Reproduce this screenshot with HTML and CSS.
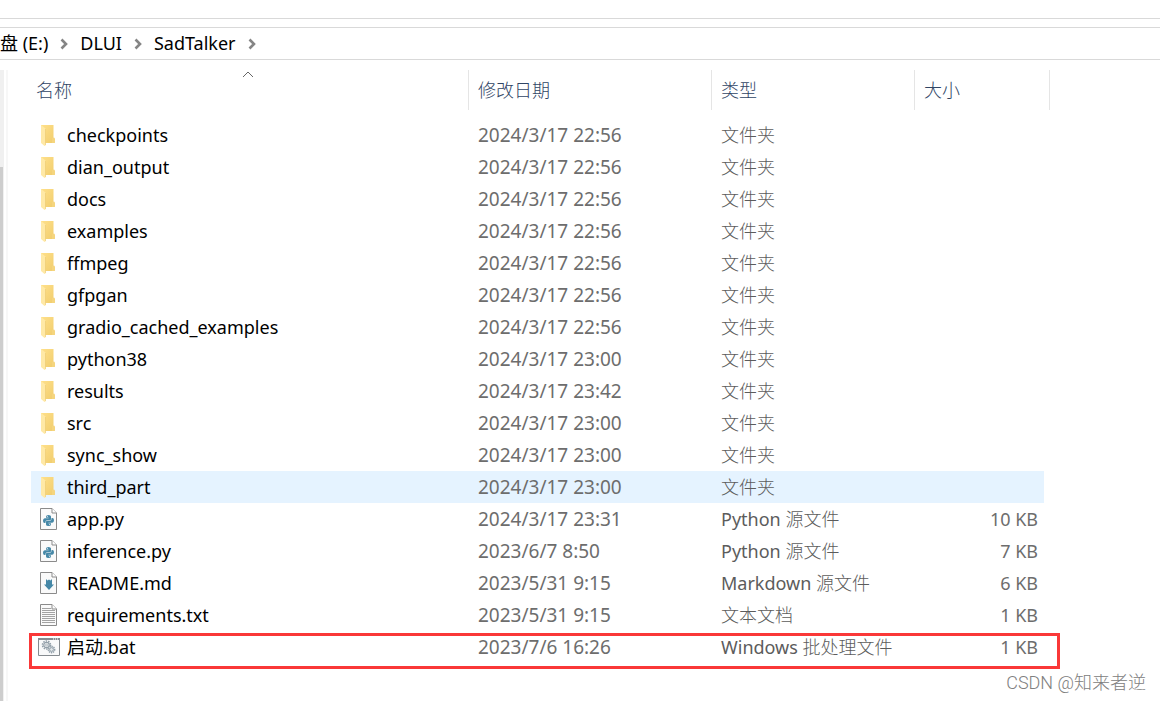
FILE: index.html
```html
<!DOCTYPE html>
<html lang="zh-CN">
<head>
<meta charset="utf-8">
<title>SadTalker</title>
<link rel="stylesheet" href="styles.css">
</head>
<body>
<svg class="sprite" width="0" height="0" aria-hidden="true">
  <defs>
    <linearGradient id="folder-back" x1="0" x2="1" y1="0" y2="1"><stop offset="0" stop-color="#ffe08a"/><stop offset="1" stop-color="#f0cc6c"/></linearGradient>
    <symbol id="chevron" viewBox="0 0 8 12"><path d="M1.5 1.5 6 6 1.5 10.5" fill="none" stroke="#858585" stroke-width="2.6"/></symbol>
    <symbol id="folder" viewBox="0 -1 22 22">
      <path d="M3 0H15.500V13L17 14V17.500L16 18H3Z" fill="url(#folder-back)"/>
      <path d="M14 13 16.200 12.500 17 14V17.500L15.500 18H14Z" fill="#f5d57e"/>
      <path d="M3 0 7.500 3.500V20.500L6.500 21 3 18Z" fill="#ffe9a6"/>
      <path d="M7.500 4V20" stroke="#edcb75" stroke-width=".7"/>
    </symbol>
    <symbol id="page" viewBox="0 0 22 22">
      <path d="M2.500.500H14L18.500 5V21.500H2.500Z" fill="#fafafa" stroke="#8b8b8b"/>
      <path d="M14 .500V5H18.500" fill="#fff" stroke="#8b8b8b"/>
    </symbol>
    <symbol id="python" viewBox="0 0 22 22">
      <use href="#page"/>
      <g fill="#4688a7">
        <path d="M8 8.500Q8 7 10.500 7T13 8.500V11.200Q13 12.300 11.800 12.300H9.200Q7.500 12.300 7.500 14V15H6.600Q5 15 5 12.700T6.700 10.300H10.600V9.700H8Z"/>
        <path d="M8 8.500Q8 7 10.500 7T13 8.500V11.200Q13 12.300 11.800 12.300H9.200Q7.500 12.300 7.500 14V15H6.600Q5 15 5 12.700T6.700 10.300H10.600V9.700H8Z" transform="rotate(180 10.500 12.500)"/>
      </g>
      <circle cx="9.300" cy="8.500" r=".5" fill="#fff"/><circle cx="11.700" cy="16.500" r=".5" fill="#fff"/>
    </symbol>
    <symbol id="markdown" viewBox="0 0 22 22">
      <use href="#page"/>
      <path d="M8 7 9.500 8.500 11 7.500 12.500 8.500 14 7V12.500H16L11 18 6 12.500H8Z" fill="#4688a7"/>
    </symbol>
    <symbol id="text" viewBox="0 0 22 22">
      <use href="#page"/>
      <path d="M4 4.500H13M4 6.500H17M4 8.500H17M4 10.500H17M4 12.500H17M4 14.500H17M4 16.500H17M4 18.500H17" stroke="#a3a3a3"/>
    </symbol>
    <symbol id="batch" viewBox="0 0 22 22">
      <path d="M.500 2.500H21.500V19.500H.500Z" fill="#f8f9fa" stroke="#858b90"/>
      <path d="M0 3H22" stroke="#858b90" stroke-width="2"/>
      <path d="M15 3H16M17 3H18M19 3H20" stroke="#fff"/>
      <g fill="none" stroke="#929fa9">
        <circle cx="8.500" cy="9" r="4" stroke-width="1.600" stroke-dasharray="1.500 1"/>
        <circle cx="8.500" cy="9" r="2.700" stroke-width="1.200"/>
        <circle cx="8.500" cy="9" r="1" stroke-width=".7"/>
        <circle cx="13.500" cy="13.500" r="3.200" fill="#e3e8eb" stroke-width="1.400" stroke-dasharray="1.300 .8"/>
        <circle cx="13.500" cy="13.500" r="1.900"/>
      </g>
    </symbol>
  </defs>
</svg>
<div class="window">
  <div class="toolbar"></div>
  <nav class="address" aria-label="路径">
    <a href="#drive">盘 (E:)</a><svg class="chevron"><use href="#chevron"/></svg>
    <a href="#dlui">DLUI</a><svg class="chevron"><use href="#chevron"/></svg>
    <a href="#sadtalker">SadTalker</a><svg class="chevron"><use href="#chevron"/></svg>
  </nav>
  <div class="content">
    <div class="scrollbar"><div class="thumb"></div></div>
    <div class="splitter"></div>
    <main class="files">
      <table>
        <colgroup><col class="col-name"><col class="col-date"><col class="col-type"><col class="col-size"></colgroup>
        <thead><tr>
          <th aria-sort="ascending"><button>名称</button><svg class="sort" viewBox="0 0 12 7"><path d="M1 6 6 1 11 6" fill="none" stroke="#666"/></svg></th>
          <th><button>修改日期</button></th><th><button>类型</button></th><th><button>大小</button></th>
        </tr></thead>
        <tbody>
          <tr><td><span class="name"><svg><use href="#folder"/></svg>checkpoints</span></td><td>2024/3/17 22:56</td><td>文件夹</td><td></td></tr>
          <tr><td><span class="name"><svg><use href="#folder"/></svg>dian_output</span></td><td>2024/3/17 22:56</td><td>文件夹</td><td></td></tr>
          <tr><td><span class="name"><svg><use href="#folder"/></svg>docs</span></td><td>2024/3/17 22:56</td><td>文件夹</td><td></td></tr>
          <tr><td><span class="name"><svg><use href="#folder"/></svg>examples</span></td><td>2024/3/17 22:56</td><td>文件夹</td><td></td></tr>
          <tr><td><span class="name"><svg><use href="#folder"/></svg>ffmpeg</span></td><td>2024/3/17 22:56</td><td>文件夹</td><td></td></tr>
          <tr><td><span class="name"><svg><use href="#folder"/></svg>gfpgan</span></td><td>2024/3/17 22:56</td><td>文件夹</td><td></td></tr>
          <tr><td><span class="name"><svg><use href="#folder"/></svg>gradio_cached_examples</span></td><td>2024/3/17 22:56</td><td>文件夹</td><td></td></tr>
          <tr><td><span class="name"><svg><use href="#folder"/></svg>python38</span></td><td>2024/3/17 23:00</td><td>文件夹</td><td></td></tr>
          <tr><td><span class="name"><svg><use href="#folder"/></svg>results</span></td><td>2024/3/17 23:42</td><td>文件夹</td><td></td></tr>
          <tr><td><span class="name"><svg><use href="#folder"/></svg>src</span></td><td>2024/3/17 23:00</td><td>文件夹</td><td></td></tr>
          <tr><td><span class="name"><svg><use href="#folder"/></svg>sync_show</span></td><td>2024/3/17 23:00</td><td>文件夹</td><td></td></tr>
          <tr class="hovered"><td><span class="name"><svg><use href="#folder"/></svg>third_part</span></td><td>2024/3/17 23:00</td><td>文件夹</td><td></td></tr>
          <tr><td><span class="name"><svg><use href="#python"/></svg>app.py</span></td><td>2024/3/17 23:31</td><td>Python 源文件</td><td>10 KB</td></tr>
          <tr><td><span class="name"><svg><use href="#python"/></svg>inference.py</span></td><td>2023/6/7 8:50</td><td>Python 源文件</td><td>7 KB</td></tr>
          <tr><td><span class="name"><svg><use href="#markdown"/></svg>README.md</span></td><td>2023/5/31 9:15</td><td>Markdown 源文件</td><td>6 KB</td></tr>
          <tr><td><span class="name"><svg><use href="#text"/></svg>requirements.txt</span></td><td>2023/5/31 9:15</td><td>文本文档</td><td>1 KB</td></tr>
          <tr class="marked"><td><span class="name"><svg><use href="#batch"/></svg>启动.bat</span></td><td>2023/7/6 16:26</td><td>Windows 批处理文件</td><td>1 KB</td></tr>
        </tbody>
      </table>
    </main>
  </div>
  <div class="watermark">CSDN @知来者逆</div>
</div>
</body>
</html>
```
FILE: styles.css
```css
* { box-sizing: border-box; }
body {
  margin: 0;
  background: #fff;
  color: #000;
  font: 18px/32px "Noto Sans", "Noto Sans CJK SC", sans-serif;
}
.sprite { position: absolute; }
.window {
  position: relative;
  display: flex;
  flex-direction: column;
  min-height: 100vh;
}
.toolbar { height: 19px; border-bottom: 1px solid #d9d9d9; }
.address {
  display: flex;
  align-items: center;
  gap: 12px;
  height: 33px;
  margin-top: 8px;
  border: solid #d9d9d9;
  border-width: 1px 0;
}
.address a {
  padding-bottom: 2px;
  color: inherit;
  line-height: 28px;
  text-decoration: none;
  white-space: nowrap;
}
.chevron { width: 8px; height: 12px; }
.content { flex: 1; display: flex; margin-top: 10px; }
.scrollbar { width: 4px; padding: 97px 1px 0 0; background: #f0f0f0; display: flex; }
.thumb { flex: 1; background: #cdcdcd; }
.splitter { width: 2px; margin-left: 2px; background: #f7f7f7; }
.files { padding-left: 23px; }
table {
  width: 1013px;
  table-layout: fixed;
  border-collapse: separate;
  border-spacing: 0;
}
.col-name { width: 438px; }
.col-date { width: 243px; }
.col-type { width: 203px; }
th {
  position: relative;
  height: 40px;
  padding: 0;
  text-align: left;
}
th::after {
  content: "";
  position: absolute;
  top: 0;
  right: 0;
  bottom: 0;
  border-right: 1px solid #e5e5e5;
}
th:last-child::after { right: -6px; }
th button {
  display: block;
  width: 100%;
  padding: 0 9px;
  border: 0;
  background: none;
  color: #304565;
  font: inherit;
  font-family: "Noto Sans", "Noto Sans CJK SC Light", "Noto Sans CJK SC", sans-serif;
  font-weight: 400;
  text-align: left;
}
th:first-child button { padding-left: 5px; }
.sort { position: absolute; top: 1px; left: 211px; width: 12px; height: 7px; }
tbody tr:first-child td { height: 41px; padding-top: 9px; }
td {
  height: 32px;
  padding: 0 9px;
  color: #6d6d6d;
  white-space: nowrap;
}
td:first-child { padding: 0 0 0 7px; color: #000; }
td:nth-child(2) { font-size: 19px; }
td:nth-child(3) {
  color: #5c5c5c;
  font-family: "Noto Sans", "Noto Sans CJK SC Light", "Noto Sans CJK SC", sans-serif;
}
td:last-child { padding-right: 6px; text-align: right; }
.name { display: flex; align-items: center; gap: 7px; }
.name svg { width: 22px; height: 22px; }
.hovered td { background: #e5f3ff; }
.marked { position: relative; }
.marked td:first-child::after {
  content: "";
  position: absolute;
  inset: 2px -16px -6px -2px;
  border: 3px solid #fa3838;
}
.watermark {
  position: absolute;
  right: 14px;
  bottom: 2px;
  color: #808080;
  font-family: Roboto, "Noto Sans CJK SC", sans-serif;
  font-weight: 300;
}
```
